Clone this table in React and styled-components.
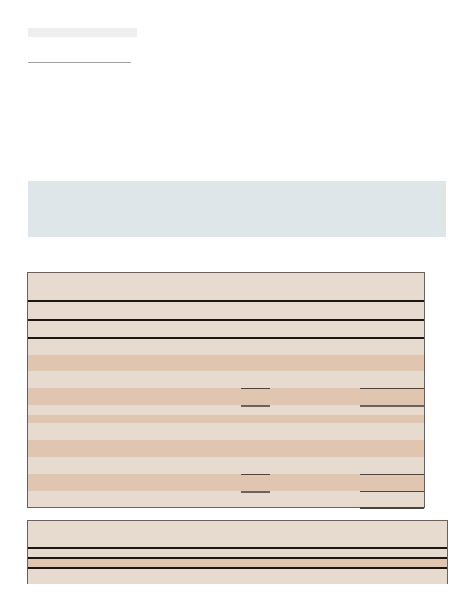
import React from 'react'
import styled, { createGlobalStyle } from 'styled-components'

const GlobalStyle = createGlobalStyle`
  html, body {
    margin: 0;
    padding: 0;
    background: #fff;
    font-family: "Liberation Sans", Arial, sans-serif;
  }
`

const LIGHT = '#e7dbcf'
const DARK = '#e0c5b1'
const FRAME = '#6b625c'
const INK = '#1e1612'
const RULE = '#4f453f'

const Page = styled.div`
  padding: 28px 0 0 28px;
  display: flex;
  flex-direction: column;
  align-items: flex-start;
`

const TitleBar = styled.div`
  width: 109px;
  height: 9px;
  background: #eeeeee;
`

const Underline = styled.div`
  margin-top: 25px;
  width: 103px;
  height: 1px;
  background: #a3a3a3;
`

const Callout = styled.div`
  margin-top: 118px;
  width: 418px;
  height: 56px;
  background: #dfe6e9;
`

const Sheet = styled.div`
  margin-top: ${({ $gap }) => $gap}px;
  margin-left: -1px;
  width: ${({ $width }) => $width}px;
  border: 1px solid ${FRAME};
  border-bottom: ${({ $open }) => ($open ? 'none' : `1px solid ${FRAME}`)};
  display: flex;
  flex-direction: column;
`

const Band = styled.div`
  height: ${({ $h }) => $h}px;
  background: ${({ $dark }) => ($dark ? DARK : LIGHT)};
  display: grid;
  grid-template-columns: 213px 29px 90px 1fr;
`

const HeavyLine = styled.div`
  height: 2px;
  background: ${INK};
`

const ruleFor = (kind) =>
  kind === 'thick' ? `2px solid ${FRAME}` : kind === 'thin' ? `1px solid ${RULE}` : 'none'

const Cell = styled.div`
  box-sizing: border-box;
  border-top: ${({ $top }) => ruleFor($top)};
  box-shadow: ${({ $under }) => ($under ? `0 2px 0 ${RULE}` : 'none')};
`

const bodyRows = [
  { h: 16 },
  { h: 16, dark: true },
  { h: 17 },
  { h: 17, dark: true, a: 'thin', b: 'thin' },
  { h: 10, a: 'thick', b: 'thick' },
  { h: 8, dark: true },
  { h: 17 },
  { h: 17, dark: true },
  { h: 17 },
  { h: 17, dark: true, a: 'thin', b: 'thin' },
  { h: 16, a: 'thick', b: 'thin', under: true },
]

function Ledger() {
  return (
    <Sheet $gap={35} $width={396}>
      <Band $h={27} />
      <HeavyLine />
      <Band $h={17} />
      <HeavyLine />
      <Band $h={16} />
      <HeavyLine />
      {bodyRows.map((r, i) => (
        <Band key={i} $h={r.h} $dark={r.dark}>
          <Cell />
          <Cell $top={r.a} />
          <Cell />
          <Cell $top={r.b} $under={r.under} />
        </Band>
      ))}
    </Sheet>
  )
}

function Summary() {
  return (
    <Sheet $gap={12} $width={419} $open>
      <Band $h={26} />
      <HeavyLine />
      <Band $h={8} />
      <HeavyLine />
      <Band $h={8} $dark />
      <HeavyLine />
      <Band $h={15} />
    </Sheet>
  )
}

export default function App() {
  return (
    <>
      <GlobalStyle />
      <Page>
        <TitleBar />
        <Underline />
        <Callout />
        <Ledger />
        <Summary />
      </Page>
    </>
  )
}
